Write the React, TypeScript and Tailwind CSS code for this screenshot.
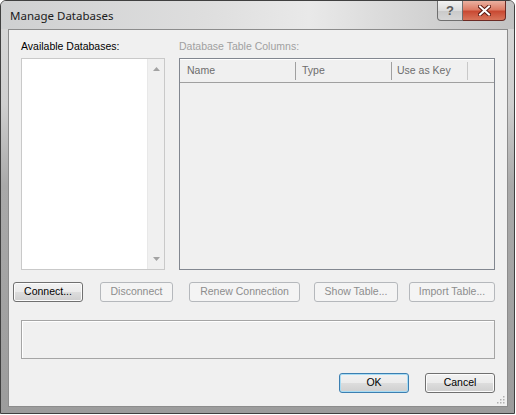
import React from 'react';

const font = { fontFamily: '"Liberation Sans", Arial, sans-serif' };

const WinButton: React.FC<{ label: string; width: string; disabled?: boolean; isDefault?: boolean }> = ({ label, width, disabled, isDefault }) => {
  if (disabled) {
    return (
      <div className={`${width} h-[20px] rounded-[3px] border border-[#b5b8bc] bg-[#f4f4f4] flex items-center justify-center text-[10.5px] text-[#8d8d8d]`}>
        {label}
      </div>
    );
  }
  return (
    <div
      className={`${width} h-[20px] rounded-[3px] border ${isDefault ? 'border-[#3c7fb1] shadow-[inset_0_0_0_1px_#a8dcf4]' : 'border-[#707070] shadow-[inset_0_0_0_1px_#fcfcfc]'} bg-[linear-gradient(180deg,#f2f2f2_0%,#ebebeb_50%,#dddddd_51%,#cfcfcf_100%)] flex items-center justify-center text-[10.5px] text-black`}
    >
      {label}
    </div>
  );
};

export default function App() {
  return (
    <div className="w-[516px] h-[415px] bg-white" style={font}>
      <div className="w-[515px] h-[414px] rounded-t-[6px] border border-[#404040] bg-[linear-gradient(180deg,#d9d9d9_0%,#cfcfcf_25%,#a9a9a9_45%,#9c9c9c_100%)] flex flex-col pl-[7px] pr-[6px] pb-[6px]">
        {/* title bar */}
        <div className="h-[28px] -ml-[7px] -mr-[6px] px-[9px] flex items-start justify-between rounded-t-[5px] bg-[linear-gradient(90deg,#cfd0d1_0%,#dedede_40%,#e9e9e9_60%,#d0d0d0_85%,#c2c2c2_100%)]">
          <div className="pt-[6px] text-[11.5px] text-[#1b1b1b]" style={{ fontFamily: '"Noto Sans", "Open Sans", sans-serif' }}>
            Manage Databases
          </div>
          <div className="flex -mr-[1px]">
            <div className="w-[26px] h-[20px] rounded-bl-[4px] border border-t-0 border-[#6f6f6f] bg-[linear-gradient(180deg,#f2f2f2_0%,#dcdcdc_50%,#c9c9c9_51%,#d6d6d6_100%)] flex items-center justify-center text-[13px] font-bold text-[#5a5a5a]">
              ?
            </div>
            <div className="w-[43px] h-[20px] rounded-br-[4px] border border-l-0 border-t-0 border-[#6b2a24] bg-[linear-gradient(180deg,#eab1a1_0%,#dd7c66_45%,#c94a33_55%,#d8755b_100%)] flex items-center justify-center">
              <svg width="13" height="11" viewBox="0 0 13 11">
                <path d="M2 1.5 L11 9.5 M11 1.5 L2 9.5" stroke="#5b1a12" strokeWidth="4" strokeLinecap="square" />
                <path d="M2 1.5 L11 9.5 M11 1.5 L2 9.5" stroke="#ffffff" strokeWidth="2" strokeLinecap="square" />
              </svg>
            </div>
          </div>
        </div>

        {/* client area */}
        <div className="flex-1 border border-[#8c8c8c] bg-[#f0f0f0] flex flex-col relative">
          <div className="flex pl-[12px] pt-[10px]">
            <div className="w-[144px] flex flex-col">
              <div className="h-[18px] text-[10.5px] text-black leading-[13px]">Available Databases:</div>
              <div className="h-[212px] border border-[#c9c9c9] bg-white flex justify-end">
                <div className="w-[17px] bg-[#f0f0f0] border-l border-[#e8e8e8] flex flex-col items-center justify-between py-[8px]">
                  <svg width="7" height="4" viewBox="0 0 7 4"><path d="M0 4 L3.5 0 L7 4 Z" fill="#a3a3a3" /></svg>
                  <svg width="7" height="4" viewBox="0 0 7 4"><path d="M0 0 L3.5 4 L7 0 Z" fill="#a3a3a3" /></svg>
                </div>
              </div>
            </div>
            <div className="w-[316px] ml-[14px] flex flex-col">
              <div className="h-[18px] text-[10.5px] text-[#a0a0a0] leading-[13px]">Database Table Columns:</div>
              <div className="h-[212px] border border-[#828790] bg-[#f0f0f0] flex flex-col">
                <div className="h-[24px] border-t border-white border-b border-b-[#a0a0a0] flex items-center text-[10.5px] text-[#6d6d6d]">
                  <div className="w-[116px] pl-[7px] h-[18px] flex items-center border-r border-[#a0a0a0]">Name</div>
                  <div className="w-[96px] pl-[6px] h-[18px] flex items-center border-r border-[#a0a0a0]">Type</div>
                  <div className="w-[76px] pl-[5px] h-[18px] flex items-center border-r border-[#c8c8c8]">Use as Key</div>
                </div>
              </div>
            </div>
          </div>

          <div className="flex items-start mt-[12px] pl-[4px]">
            <WinButton label="Connect..." width="w-[70px]" />
            <div className="ml-[17px]"><WinButton label="Disconnect" width="w-[73px]" disabled /></div>
            <div className="ml-[16px]"><WinButton label="Renew Connection" width="w-[111px]" disabled /></div>
            <div className="ml-[14px]"><WinButton label="Show Table..." width="w-[84px]" disabled /></div>
            <div className="ml-[11px]"><WinButton label="Import Table..." width="w-[86px]" disabled /></div>
          </div>

          <div className="ml-[12px] mt-[18px] w-[474px] h-[39px] border border-[#a5a5a5] bg-[#f0f0f0] shadow-[inset_1px_1px_0_#ffffff]" />

          <div className="flex justify-end mt-[14px] pr-[12px] gap-[16px]">
            <WinButton label="OK" width="w-[70px]" isDefault />
            <WinButton label="Cancel" width="w-[70px]" />
          </div>

          {/* size grip */}
          <svg className="absolute right-[2px] bottom-[2px]" width="10" height="10" viewBox="0 0 10 10">
            {[[8, 2], [8, 5], [5, 5], [8, 8], [5, 8], [2, 8]].map(([x, y], i) => (
              <rect key={i} x={x} y={y} width="1.5" height="1.5" fill="#b0b0b0" />
            ))}
          </svg>
        </div>
      </div>
    </div>
  );
}
